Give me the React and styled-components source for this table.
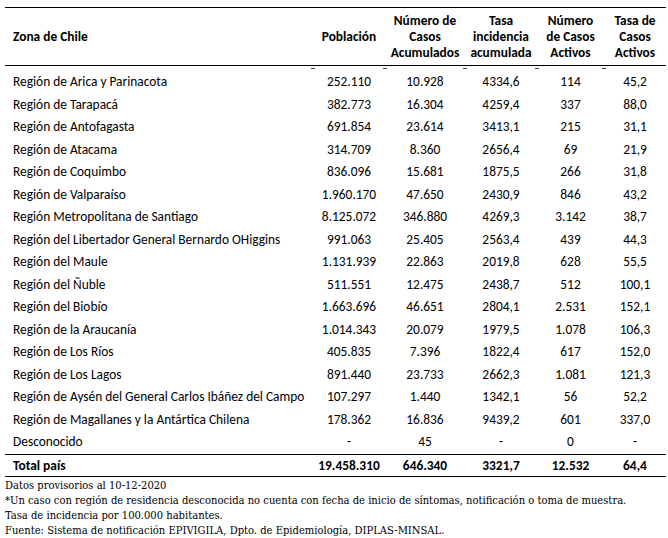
import React from 'react'
import styled, { createGlobalStyle } from 'styled-components'

const GlobalStyle = createGlobalStyle`
  html, body {
    margin: 0;
    padding: 0;
    background: #fff;
  }
`

const rows = [
  ['Región de Arica y Parinacota', '252.110', '10.928', '4334,6', '114', '45,2'],
  ['Región de Tarapacá', '382.773', '16.304', '4259,4', '337', '88,0'],
  ['Región de Antofagasta', '691.854', '23.614', '3413,1', '215', '31,1'],
  ['Región de Atacama', '314.709', '8.360', '2656,4', '69', '21,9'],
  ['Región de Coquimbo', '836.096', '15.681', '1875,5', '266', '31,8'],
  ['Región de Valparaíso', '1.960.170', '47.650', '2430,9', '846', '43,2'],
  ['Región Metropolitana de Santiago', '8.125.072', '346.880', '4269,3', '3.142', '38,7'],
  ['Región del Libertador General Bernardo OHiggins', '991.063', '25.405', '2563,4', '439', '44,3'],
  ['Región del Maule', '1.131.939', '22.863', '2019,8', '628', '55,5'],
  ['Región del Ñuble', '511.551', '12.475', '2438,7', '512', '100,1'],
  ['Región del Biobío', '1.663.696', '46.651', '2804,1', '2.531', '152,1'],
  ['Región de la Araucanía', '1.014.343', '20.079', '1979,5', '1.078', '106,3'],
  ['Región de Los Ríos', '405.835', '7.396', '1822,4', '617', '152,0'],
  ['Región de Los Lagos', '891.440', '23.733', '2662,3', '1.081', '121,3'],
  ['Región de Aysén del General Carlos Ibáñez del Campo', '107.297', '1.440', '1342,1', '56', '52,2'],
  ['Región de Magallanes y la Antártica Chilena', '178.362', '16.836', '9439,2', '601', '337,0'],
  ['Desconocido', '-', '45', '-', '0', '-'],
]

const total = ['Total país', '19.458.310', '646.340', '3321,7', '12.532', '64,4']

const notes = [
  'Datos provisorios al 10-12-2020',
  '*Un caso con región de residencia desconocida no cuenta con fecha de inicio de síntomas, notificación o toma de muestra.',
  'Tasa de incidencia por 100.000 habitantes.',
  'Fuente: Sistema de notificación EPIVIGILA, Dpto. de Epidemiología, DIPLAS-MINSAL.',
]

const widths = [308, 72, 80, 72, 67, 62]

const StyledPage = styled.div`
  width: 668px;
  height: 538px;
  box-sizing: border-box;
  padding: 7px 2px 0 5px;
  display: flex;
  flex-direction: column;
  overflow: hidden;
`

const StyledTable = styled.table`
  border-collapse: collapse;
  table-layout: fixed;
  width: 661px;
  font-family: Carlito, Lato, 'Liberation Sans', sans-serif;
  font-size: 13.4px;
  color: #000;
`

const StyledHeadCell = styled.th`
  position: relative;
  height: 57px;
  padding: 0;
  border-top: 1.5px solid #000;
  border-bottom: 1px solid #000;
  font-weight: 700;
  line-height: 16px;
  text-align: ${(p) => (p.$left ? 'left' : 'center')};
  padding-left: ${(p) => (p.$left ? '8px' : '0')};
  vertical-align: middle;

  ${(p) => !p.$left && `
    &::after {
      content: '';
      position: absolute;
      left: -2px;
      bottom: -4px;
      width: 4px;
      height: 1px;
      background: #444;
    }
  `}
`

const StyledCell = styled.td`
  padding: 0;
  padding-top: ${(p) => (p.$lead ? '5px' : '0')};
  line-height: 22.5px;
  white-space: nowrap;
  text-align: ${(p) => (p.$left ? 'left' : 'center')};
  padding-left: ${(p) => (p.$left ? '8px' : '0')};
`

const StyledTotalCell = styled.td`
  padding: 0;
  line-height: 21px;
  border-top: 1px solid #000;
  border-bottom: 1px solid #000;
  font-weight: 700;
  text-align: ${(p) => (p.$left ? 'left' : 'center')};
  padding-left: ${(p) => (p.$left ? '8px' : '0')};
`

const StyledNotes = styled.div`
  margin-top: 1px;
  font-family: 'DejaVu Serif Condensed', 'DejaVu Serif', serif;
  font-stretch: condensed;
  font-size: 11.1px;
  line-height: 15px;
  color: #000;
  white-space: nowrap;
`

const StyledScrollEdge = styled.div`
  margin-top: auto;
  margin-left: -5px;
  margin-right: -2px;
  height: 3px;
  background: linear-gradient(to right, #efefef 0, #efefef 7%, #d6d6d6 8%, #d6d6d6 100%);
`

const Header = () => (
  <thead>
    <tr>
      <StyledHeadCell $left>Zona de Chile</StyledHeadCell>
      <StyledHeadCell>Población</StyledHeadCell>
      <StyledHeadCell>Número de<br />Casos<br />Acumulados</StyledHeadCell>
      <StyledHeadCell>Tasa<br />incidencia<br />acumulada</StyledHeadCell>
      <StyledHeadCell>Número<br />de Casos<br />Activos</StyledHeadCell>
      <StyledHeadCell>Tasa de<br />Casos<br />Activos</StyledHeadCell>
    </tr>
  </thead>
)

const App = () => (
  <>
    <GlobalStyle />
    <StyledPage>
      <StyledTable>
        <colgroup>
          {widths.map((w, i) => <col key={i} style={{ width: w }} />)}
        </colgroup>
        <Header />
        <tbody>
          {rows.map((row, r) => (
            <tr key={row[0]}>
              {row.map((value, c) => (
                <StyledCell key={c} $left={c === 0} $lead={r === 0}>{value}</StyledCell>
              ))}
            </tr>
          ))}
          <tr>
            {total.map((value, c) => (
              <StyledTotalCell key={c} $left={c === 0}>{value}</StyledTotalCell>
            ))}
          </tr>
        </tbody>
      </StyledTable>
      <StyledNotes>
        {notes.map((line) => <div key={line}>{line}</div>)}
      </StyledNotes>
      <StyledScrollEdge />
    </StyledPage>
  </>
)

export default App
